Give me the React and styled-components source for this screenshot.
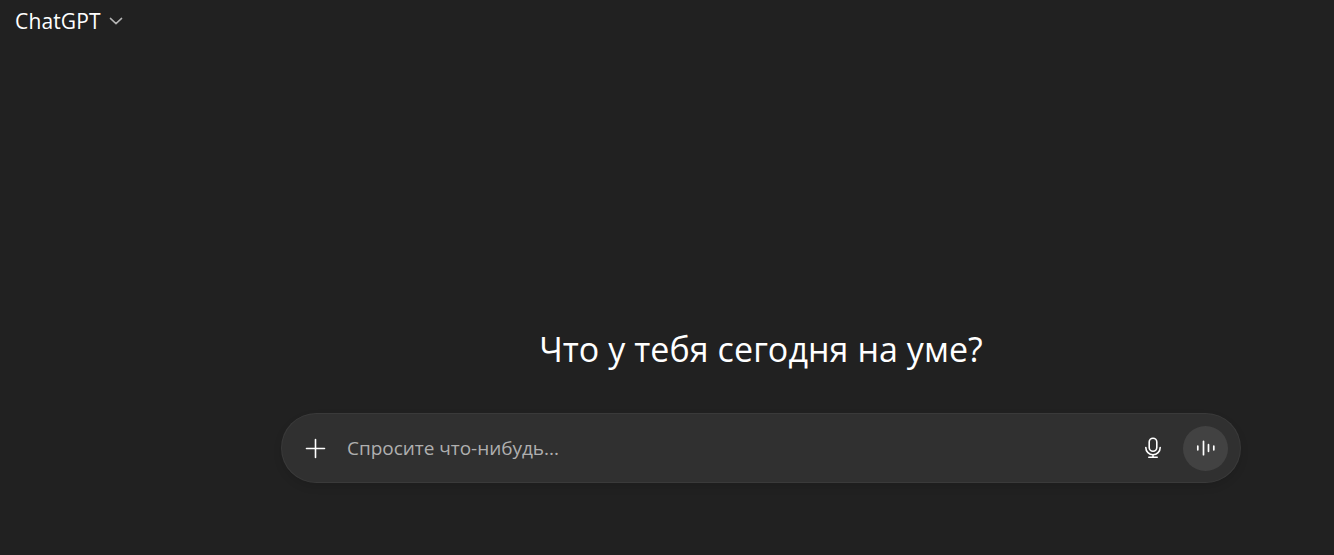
import React from "react";
import styled, { createGlobalStyle } from "styled-components";

const Global = createGlobalStyle`
  html, body { margin: 0; padding: 0; height: 100%; background: #212121; }
  #root { height: 100%; }
`;

const Page = styled.div`
  height: 555px;
  display: flex;
  flex-direction: column;
  background: #212121;
  color: #fff;
  font-family: "Open Sans", "Noto Sans", sans-serif;
  overflow: hidden;
`;

const Header = styled.header`
  height: 41px;
  display: flex;
  align-items: center;
  padding-left: 15px;
  gap: 7px;
`;

const Brand = styled.span`
  font-size: 21px;
  line-height: 26px;
  letter-spacing: 0.15px;
  color: #fff;
`;

const Main = styled.main`
  flex: 1;
  display: flex;
  flex-direction: column;
  align-items: center;
  padding-left: 188px;
  padding-top: 285px;
`;

const Title = styled.h1`
  margin: 0 0 41px;
  font-size: 34px;
  line-height: 46px;
  font-weight: 400;
  letter-spacing: 0.07px;
  color: #fff;
  white-space: nowrap;
`;

const Composer = styled.div`
  box-sizing: border-box;
  width: 960px;
  height: 70px;
  display: flex;
  align-items: center;
  padding: 0 13px 0 24px;
  background: #303030;
  border-radius: 35px;
  box-shadow: inset 0 0 0 1px rgba(255, 255, 255, 0.05), 0 4px 8px rgba(0, 0, 0, 0.1);
`;

const Plus = styled.span`
  display: flex;
  width: 21px;
  height: 21px;
  margin-right: 21px;
`;

const Placeholder = styled.span`
  flex: 1;
  font-size: 19px;
  line-height: 26px;
  letter-spacing: -0.03px;
  color: #afafaf;
`;

const Mic = styled.span`
  display: flex;
  width: 22px;
  height: 22px;
  margin-right: 19px;
`;

const Voice = styled.span`
  display: flex;
  align-items: center;
  justify-content: center;
  width: 45px;
  height: 45px;
  border-radius: 50%;
  background: #424242;
`;

export default function App() {
  return (
    <Page>
      <Global />
      <Header>
        <Brand>ChatGPT</Brand>
        <svg width="16" height="16" viewBox="0 0 16 16" fill="none" stroke="#b4b4b4" strokeWidth="1.5" strokeLinecap="round" strokeLinejoin="round">
          <path d="M2.4 5.4 8 10.6l5.6-5.2" />
        </svg>
      </Header>
      <Main>
        <Title>Что у тебя сегодня на уме?</Title>
        <Composer>
          <Plus>
            <svg width="21" height="21" viewBox="0 0 21 21" fill="none" stroke="#fff" strokeWidth="1.6" strokeLinecap="round">
              <path d="M10.5 1.5v18M1.5 10.5h18" />
            </svg>
          </Plus>
          <Placeholder>Спросите что-нибудь...</Placeholder>
          <Mic>
            <svg width="22" height="22" viewBox="0 0 22 22" fill="none" stroke="#fff" strokeWidth="1.6" strokeLinecap="round">
              <rect x="7.2" y="1.2" width="7.6" height="13" rx="3.8" />
              <path d="M3.8 10.6a7.2 7.2 0 0 0 14.4 0M11 17.8v2.4M6.8 20.3h8.4" />
            </svg>
          </Mic>
          <Voice>
            <svg width="20" height="20" viewBox="0 0 20 20" fill="none" stroke="#fff" strokeWidth="1.7" strokeLinecap="round">
              <path d="M1.8 8.2v3.6M7.5 3.3v13.4M12.5 6.7v6.6M17.8 8.2v3.6" />
            </svg>
          </Voice>
        </Composer>
      </Main>
    </Page>
  );
}
